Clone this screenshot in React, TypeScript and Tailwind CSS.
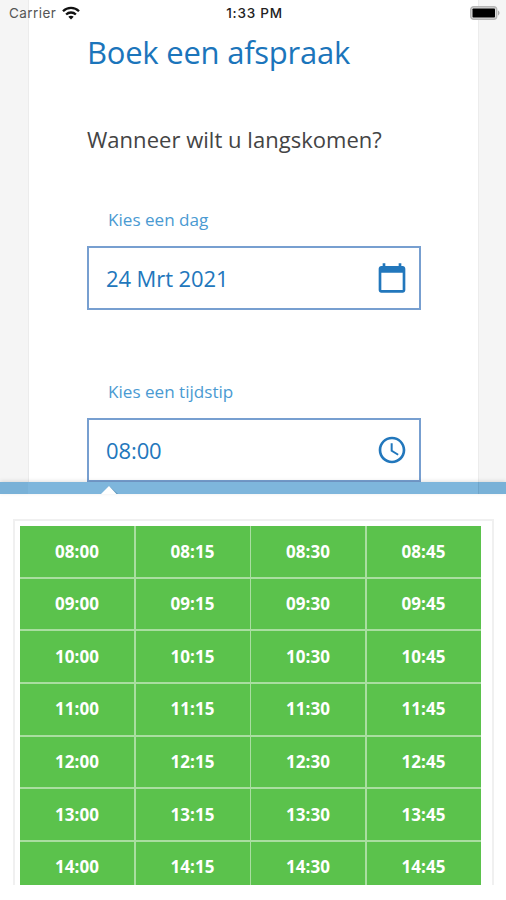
import { MdAccessTime, MdCalendarToday } from 'react-icons/md'
import type { ReactNode } from 'react'

const hours = ['08', '09', '10', '11', '12', '13', '14']
const quarters = ['00', '15', '30', '45']

function StatusBar() {
    return (
        <header className="absolute inset-x-0 top-0 z-10 flex h-[26px] items-center justify-between pl-[9px] pr-[6px] font-['Inter','Liberation_Sans',sans-serif]">
            <div className="flex w-[120px] items-center gap-[6px] text-[13.5px] text-[#555]">
                <span className="tracking-[0.45px]">Carrier</span>
                <svg viewBox="0 0 18 14" className="h-[14px] w-[18px]">
                    <g fill="none" stroke="#111" strokeWidth="2.3">
                        <path d="M1 5.2C5.4.8 12.6.8 17 5.2" />
                        <path d="M4.1 8.5c2.8-2.7 7-2.7 9.8 0" />
                    </g>
                    <path d="M9 13.4 6.3 10.8c1.5-1.4 3.9-1.4 5.4 0Z" fill="#111" />
                </svg>
            </div>
            <span className="pt-[1px] text-[13.5px] font-medium tracking-[0.75px] text-[#222]">
                1:33 PM
            </span>
            <div className="flex w-[120px] justify-end">
                <svg viewBox="0 0 30 14" className="h-[14px] w-[30px]">
                    <rect x="0.7" y="0.7" width="26" height="12.6" rx="3" fill="#ddd" stroke="#b5b5b5" strokeWidth="1.4" />
                    <rect x="2.5" y="2.5" width="22.5" height="9" rx="0.8" fill="#000" />
                    <path d="M28 4.6c2 .7 2 4.1 0 4.8Z" fill="#aaa" />
                </svg>
            </div>
        </header>
    )
}

type FieldProps = {
    label: string
    value: string
    icon: ReactNode
}

function Field({ label, value, icon }: FieldProps) {
    return (
        <div>
            <div className="pl-[21px] text-[17.1px] leading-[24px] text-[#4a9ad2]">
                {label}
            </div>
            <div className="mt-[14px] flex h-[64px] w-[334px] items-center justify-between border-2 border-[#779fd0] pl-[17px] pr-[11px] text-[22px] text-[#2277bc]">
                <span className="tracking-[-0.1px]">{value}</span>
                {icon}
            </div>
        </div>
    )
}

export default function App() {
    return (
        <div className="relative flex h-[900px] w-[506px] flex-col overflow-hidden bg-white font-['Open_Sans',sans-serif]">
            <StatusBar />
            <main className="h-[482px] shrink-0 overflow-hidden bg-[#f5f5f5] px-[28px]">
                <div className="h-full w-[451px] border-x border-[#ececec] bg-white pl-[58px] pt-[30px]">
                    <h1 className="text-[31px] leading-[45px] tracking-[-0.24px] text-[#1b75bb]">
                        Boek een afspraak
                    </h1>
                    <p className="mt-[48px] text-[22px] leading-[32px] tracking-[0.03px] text-[#444]">
                        Wanneer wilt u langskomen?
                    </p>
                    <div className="mt-[53px] flex flex-col gap-[70px]">
                        <Field
                            label="Kies een dag"
                            value="24 Mrt 2021"
                            icon={<MdCalendarToday className="size-[32px]" />}
                        />
                        <Field
                            label="Kies een tijdstip"
                            value="08:00"
                            icon={<MdAccessTime className="size-[32px]" />}
                        />
                    </div>
                </div>
            </main>
            <div className="flex h-[12px] shrink-0 items-end bg-[#7eb6dc] shadow-[0_-1px_4px_rgba(0,0,0,0.12)]">
                <div className="h-full w-[28px] bg-[#79b1d7]" />
                <svg viewBox="0 0 17 8" className="ml-[73px] h-[8px] w-[17px]">
                    <path d="M8 0 17 8H14Z" fill="#5b93b8" />
                    <path d="M0 8 8 0l7.5 8Z" fill="#fff" />
                </svg>
                <div className="ml-auto h-full w-[28px] border-l border-[#6fa5ca] bg-[#79b1d7]" />
            </div>
            <section className="ml-[13px] mt-[25px] h-[366px] w-[481px] shrink-0 overflow-hidden border-x-2 border-t-2 border-[#f0f0f0] pl-[5px] pt-[5px]">
                <div className="grid w-[460.5px] grid-cols-4 gap-x-[1.5px] gap-y-[2px] bg-[#a9dea0]">
                    {hours.map((hour) =>
                        quarters.map((quarter) => (
                            <div
                                key={hour + quarter}
                                className="flex h-[50.65px] items-center justify-center bg-[#5bc24c] text-[17px] font-bold text-white"
                            >
                                {hour}:{quarter}
                            </div>
                        ))
                    )}
                </div>
            </section>
        </div>
    )
}
